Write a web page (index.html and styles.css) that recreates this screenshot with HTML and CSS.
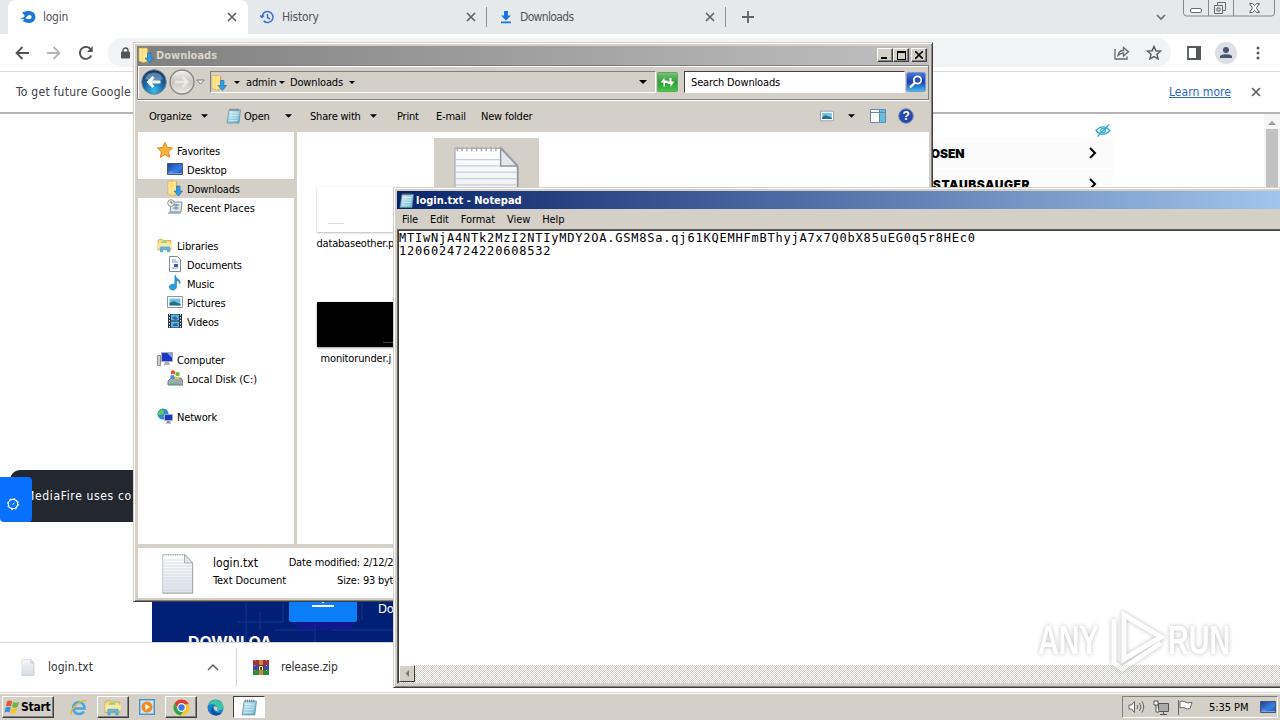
FILE: index.html
```html
<!DOCTYPE html>
<html lang="en">
<head>
    <meta charset="UTF-8">
    <title>Desktop</title>
    <link rel="stylesheet" href="styles.css">
</head>
<body>
<!-- shared icons -->
<svg class="defs" width="0" height="0">
    <linearGradient id="gFolder" x1="0" x2="1"><stop offset="0" stop-color="#fff2a8"/><stop offset="1" stop-color="#e3b94a"/></linearGradient>
    <linearGradient id="gPad" x1="0" x2="1" y2="1"><stop offset="0" stop-color="#d8f3fa"/><stop offset="1" stop-color="#62afc9"/></linearGradient>
    <linearGradient id="gScreen" x1="0" x2="1" y2="1"><stop offset="0" stop-color="#1b3f99"/><stop offset=".6" stop-color="#3b7fe0"/><stop offset="1" stop-color="#1c4db0"/></linearGradient>
    <linearGradient id="gPage" x1="0" x2="0" y2="1"><stop offset="0" stop-color="#fff"/><stop offset="1" stop-color="#dfe4ea"/></linearGradient>
    <linearGradient id="gFind" x1="0" x2="0" y2="1"><stop offset="0" stop-color="#4a78d8"/><stop offset=".5" stop-color="#1f3fae"/><stop offset="1" stop-color="#3fc4f0"/></linearGradient>
    <linearGradient id="gRef" x1="0" x2="0" y2="1"><stop offset="0" stop-color="#7cc67a"/><stop offset=".5" stop-color="#2d9a34"/><stop offset="1" stop-color="#45c94a"/></linearGradient>
    <radialGradient id="gBack" cx=".5" cy=".85" r=".8"><stop offset="0" stop-color="#37c0ee"/><stop offset=".5" stop-color="#1d6aa8"/><stop offset="1" stop-color="#123a68"/></radialGradient>
    <linearGradient id="gFwd" x1="0" x2="0" y2="1"><stop offset="0" stop-color="#f4f2ee"/><stop offset=".5" stop-color="#c9c6c0"/><stop offset="1" stop-color="#eeece8"/></linearGradient>
    <symbol id="dl" viewBox="0 0 16 16"><path d="M1 1h7l2 1v13l-5 .5L1 14z" fill="url(#gFolder)" stroke="#c9a23c" stroke-width=".6"/><path d="M5 2l4-1v13l-4 1.500z" fill="#fbe48c"/><path d="M9.500 6h3.500v5h2.600L11.500 16 7 11h2.500z" fill="#2f9ae8" stroke="#1668b0" stroke-width=".6"/></symbol>
    <symbol id="pad" viewBox="0 0 16 16"><path d="M3 2h11.500L13 15H1z" fill="url(#gPad)" stroke="#5b8798" stroke-width=".7"/><path d="M4 5h8M4 7.500h8M3.500 10h8M3 12.500h8" stroke="#f2fbfd" stroke-width=".6"/><path d="M4 .5v2.500M6 .5v2.500M8 .5v2.500M10 .5v2.500M12 .5v2.500" stroke="#667" stroke-width=".8"/></symbol>
    <symbol id="screen" viewBox="0 0 16 16"><path d="M.5 2.500h15v11h-15z" fill="url(#gScreen)" stroke="#49566b"/><path d="M1 12.500h14M2 11h4" stroke="#6aa5ee"/></symbol>
    <symbol id="lib" viewBox="0 0 16 16"><path d="M1 3l4-1 1 1.500h8V13H1z" fill="#f5dc82" stroke="#c6a347" stroke-width=".7"/><path d="M4 5l5-1 1 3H4z" fill="#7fcf74"/><path d="M1 6h14v5H1z" fill="#f9e8a4"/><path d="M3.500 15v-5h9v5h-2v-2.500h-5V15z" fill="#63b9e6" stroke="#3b8cbd" stroke-width=".5"/></symbol>
    <symbol id="pic" viewBox="0 0 16 16"><path d="M.5 2.500h15v11H.5z" fill="#fff" stroke="#8c97a3"/><path d="M2.500 4.500h11v7h-11z" fill="#6fc0e6"/><path d="M2.500 9l4-2 7 3v1.500h-11z" fill="#276d80"/></symbol>
    <symbol id="page" viewBox="0 0 32 42"><path d="M.7 1.500h22.500l7.300 8v30.500H.7z" fill="url(#gPage)" stroke="#b0b5bb" stroke-width=".7"/><path d="M.7 40.300h30v-30" fill="none" stroke="#8f959b" stroke-width=".7"/><path d="M1 7h21M1 10h21M1 13h29M1 16h29M1 19h29M1 22h29M1 25h29M1 28h29M1 31h29M1 34h29M1 37h29" stroke="#c3cede" stroke-width=".6"/><path d="M22.500 1.500v8.500h8z" fill="#e4e7ea" stroke="#8e949b" stroke-width=".7"/><path d="M1.500 2h21" stroke="#a8a8a8" stroke-width="2" stroke-dasharray=".7 1.600"/></symbol>
    <symbol id="x" viewBox="0 0 10 10"><path d="M1 1l8 8M9 1L1 9" stroke="#5f6368" stroke-width="1.700" fill="none"/></symbol>
    <symbol id="dn" viewBox="0 0 8 4"><path d="M0 0h8L4 4z"/></symbol>
</svg>

<div class="desktop">
    <div class="browser">
        <div class="tabs">
            <div class="tab active">
                <svg width="16" height="14" viewBox="0 0 16 14"><path d="M2 2.500C5 1 7 1 9.500 1a6 6 0 010 12C6 13 4 11.500 2 11c1-.3 2-.7 2.500-1.500C3 9.300 1.500 9 0 8c2 0 3.500-.5 4.500-1.500C5 5 3.500 4.500 2 2.500zM9.500 5C7.500 5 7 7 5.500 8c1 .8 2.500 1.200 4 1.200a2.100 2.100 0 000-4.200z" fill="#1d77d8"/></svg>
                <span>login</span><svg class="close"><use href="#x"/></svg>
            </div>
            <div class="tab">
                <svg width="14" height="14" viewBox="0 0 14 14" fill="none" stroke="#3b6fd0" stroke-width="1.500"><path d="M2 7a5.500 5.500 0 111.600 3.900M.2 5.500L2 7.500l2-2M7.500 4v3.500l2.500 1.500"/></svg>
                <span>History</span><svg class="close"><use href="#x"/></svg>
            </div>
            <div class="tab">
                <svg width="14" height="14" viewBox="0 0 14 14" fill="#1a73e8"><path d="M5 1h4v4.500h3L7 10.500 2 5.500h3zM2 11.500h10v1.700H2z"/></svg>
                <span>Downloads</span><svg class="close"><use href="#x"/></svg>
            </div>
            <svg class="plus" width="12" height="12"><path d="M6 0v12M0 6h12" stroke="#5f6368" stroke-width="1.800"/></svg>
            <svg class="chev" width="10" height="7"><path d="M1 1l4 4 4-4" fill="none" stroke="#6b6f74" stroke-width="1.700"/></svg>
            <svg class="winbtns" width="94" height="18" fill="none" stroke="#85898d"><path d="M1.500 0v13q0 3 3 3h85q3 0 3-3V0M26.500 0v16M51.500 0v16" /><g stroke="#676b70"><rect x="8.500" y="8.500" width="11" height="4" rx="1.500" fill="#fff"/><path d="M35.500 2.500h8v8h-3v3h-8v-8h3zM35.500 5.500h5v5M35 8h3v3h-3z"/><path d="M67.500 3.500h3l2 2 2-2h3l-3.200 4.500 3.200 4.500h-3l-2-2-2 2h-3L70.500 8z" fill="#fff"/></g></svg>
        </div>
        <div class="toolbar">
            <svg width="14" height="14" viewBox="0 0 14 14"><path d="M14 7H1.500M7.500 1l-6 6 6 6" fill="none" stroke="#505357" stroke-width="1.800"/></svg>
            <svg width="14" height="14" viewBox="0 0 14 14"><path d="M0 7h12.500M6.500 1l6 6-6 6" fill="none" stroke="#b3b5b8" stroke-width="1.800"/></svg>
            <svg width="14" height="14" viewBox="0 0 14 14"><path d="M12.300 9.500A6 6 0 1111.500 3" fill="none" stroke="#505357" stroke-width="1.900"/><path d="M13.700 0v6H8z" fill="#505357"/></svg>
            <div class="omnibox">
                <svg width="9" height="12"><path d="M2 5V3.500a2.500 2.500 0 015 0V5" fill="none" stroke="#555" stroke-width="1.400"/><rect y="4.500" width="9" height="7" rx="1" fill="#555"/></svg>
                <svg class="share" width="16" height="14" fill="none" stroke="#666a6f" stroke-width="1.300"><path d="M1 3v10h12v-2.500M4 9.500C4.500 6 6.500 4.500 9.500 4.500V1.500L14.500 5.700 9.500 10V7C7 7 5.500 8 4 9.500z"/></svg>
                <svg width="16" height="15"><path d="M8 1.500l1.900 4.300 4.600.4-3.500 3.100 1.100 4.600L8 11.500l-4.100 2.400L5 9.300 1.500 6.200l4.600-.4z" fill="none" stroke="#5b5f64" stroke-width="1.500"/></svg>
            </div>
            <svg class="side" width="14" height="14"><path d="M1 1h12v12H1z" fill="none" stroke="#55585c" stroke-width="1.800"/><path d="M9 0h5v14H9z" fill="#55585c"/></svg>
            <svg class="user" width="22" height="22"><circle cx="11" cy="11" r="11" fill="#dcdfe4"/><circle cx="11" cy="8" r="3" fill="#49536f"/><path d="M5 16v-1.500c0-3 12-3 12 0V16z" fill="#49536f"/></svg>
            <svg class="dots" width="4" height="14" fill="#55585c"><circle cx="2" cy="2" r="1.500"/><circle cx="2" cy="7" r="1.500"/><circle cx="2" cy="12" r="1.500"/></svg>
        </div>
        <div class="infobar">
            <span>To get future Google</span>
            <a>Learn more</a>
            <svg width="10" height="10"><use href="#x"/></svg>
        </div>
        <div class="page">
            <div class="ads">
                <svg class="eye" width="16" height="13" fill="none" stroke="#27a5d0" stroke-width="1.200"><path d="M1 6.500Q8-1 15 6.500 8 14 1 6.500zM2.500 12.500L14 .5"/><circle cx="8" cy="6.500" r="2.300"/></svg>
                <div class="ad"><b>DOSEN</b><svg width="8" height="12"><path d="M1 1l5 5-5 5" fill="none" stroke="#000" stroke-width="2"/></svg></div>
                <div class="ad second"><b>E STAUBSAUGER</b><svg width="8" height="12"><path d="M1 1l5 5-5 5" fill="none" stroke="#000" stroke-width="2"/></svg></div>
            </div>
            <div class="scroll"><svg width="8" height="4"><path d="M4 0l4 4H0z" fill="#9a9a9a"/></svg><div class="thumb"></div></div>
            <div class="cookie">MediaFire uses co</div>
            <div class="gear"><svg width="14" height="14" fill="none" stroke="#fff"><circle cx="7" cy="7" r="4.700" stroke-width="1.200"/><circle cx="7" cy="7" r="5.600" stroke-dasharray="1.800 2.600" stroke-width="1"/><path d="M6.500 7.500L8.500 6"/></svg></div>
            <div class="banner">
                <svg width="241" height="42"><g stroke="#123a90" fill="none"><path d="M94 0v42M131 0v22H86M108 12v18M210 0v20M163 24v18M180 30h61M163 30h-40"/></g><path d="M145 22h55v9h-55z" fill="#2512a8" opacity=".4"/><rect x="137" y="-6" width="68" height="28" rx="2" fill="#0a7df7"/><path d="M160 6h22M169 0l2 2 2-2" stroke="#fff" stroke-width="2" fill="none"/></svg>
                <b>DOWNLOA</b><span>Do</span>
            </div>
        </div>
        <div class="shelf">
            <div class="dlitem"><svg width="14" height="17"><use href="#page"/></svg><span>login.txt</span><svg class="up" width="12" height="7"><path d="M1 6l5-5 5 5" fill="none" stroke="#5f6368" stroke-width="1.500"/></svg></div>
            <div class="dlitem"><svg width="16" height="15"><path fill="#b12b3e" d="M0 0h16v5H0z"/><path fill="#3b4fa8" d="M0 5h16v5H0z"/><path fill="#2b8a3c" d="M0 10h16v5H0z"/><path fill="#c98a35" d="M6 0h4v15H6z"/><path d="M5 5h6v5H5z" fill="#6b3a1a"/><path d="M6.500 10V6.500h3V10" stroke="#fff" fill="none"/><path d="M2 0v15M13.500 0v15" stroke="#e8b04a" stroke-dasharray="1 4"/></svg><span>release.zip</span></div>
        </div>
    </div>

    <div class="window explorer">
        <div class="title"><svg width="16" height="16"><use href="#dl"/></svg><b>Downloads</b>
            <div class="caps"><i><svg width="8" height="8"><path d="M0 6h6v2H0z"/></svg></i><i><svg width="9" height="9"><path d="M0 0h9v9H0zM1 2v6h7V2z" fill-rule="evenodd"/></svg></i><i class="gap"><svg width="8" height="8"><path d="M0 0l8 8M8 0L0 8" stroke="#000" stroke-width="1.600"/></svg></i></div>
        </div>
        <div class="address">
            <svg width="26" height="26" viewBox="0 0 26 26"><circle cx="13" cy="13" r="12.300" fill="url(#gBack)" stroke="#7d8791"/><path d="M4 10a9.500 9.500 0 0118 0q-9 4-18 0z" fill="#fff" opacity=".3"/><path d="M19.500 13h-12M12.500 8l-5 5 5 5" stroke="#fff" stroke-width="2.800" fill="none"/></svg>
            <svg width="26" height="26" viewBox="0 0 26 26"><circle cx="13" cy="13" r="12" fill="url(#gFwd)" stroke="#8b8a88" stroke-width="1.400"/><path d="M6 13h12M13.500 8l5 5-5 5" stroke="#ebe9e5" stroke-width="2.500" fill="none"/></svg>
            <svg class="hist" width="9" height="6"><path d="M.7 1h7.600L4.500 5z" fill="#fff" stroke="#777"/></svg>
            <div class="crumbs"><svg width="16" height="17"><use href="#dl"/></svg><svg class="d"><use href="#dn"/></svg><span>admin</span><svg class="d"><use href="#dn"/></svg><span class="w53">Downloads</span><svg class="d"><use href="#dn"/></svg><svg class="d last"><use href="#dn"/></svg></div>
            <svg class="refresh" width="21" height="20"><rect x=".5" y=".5" width="20" height="19" rx="1" fill="url(#gRef)" stroke="#5fa565"/><path d="M6.500 14.500v-4H3.500L7.500 5.500v3h3v2.500H8v3.500zM14.500 6v3.500h3L13.500 15v-3h-3V9.500h2V6z" fill="#fff"/></svg>
            <div class="search">Search Downloads</div>
            <svg class="find" width="20" height="20"><rect x=".5" y=".5" width="19" height="19" rx="2" fill="url(#gFind)" stroke="#7a95cf"/><circle cx="11.500" cy="8" r="3.700" fill="#2b4fc0" stroke="#fff" stroke-width="1.800"/><path d="M8.500 11L4 15.500" stroke="#fff" stroke-width="2.400"/></svg>
        </div>
        <div class="commands">
            <span class="c1">Organize</span><svg class="d"><use href="#dn"/></svg>
            <svg class="padicon" width="16" height="16"><use href="#pad"/></svg><span class="c2">Open</span><svg class="d"><use href="#dn"/></svg>
            <span class="c3">Share with</span><svg class="d"><use href="#dn"/></svg>
            <span class="c4">Print</span><span class="c5">E-mail</span><span class="c6">New folder</span>
            <svg class="views" width="14" height="14"><use href="#pic"/></svg><svg class="d"><use href="#dn"/></svg>
            <svg class="preview" width="16" height="14"><path d="M.5 .5h15v13H.5z" fill="#fff" stroke="#6d86ad"/><path d="M10 1h5v12h-5z" fill="#66bfdf"/><path d="M1 3.500h14M9.500 1v12" stroke="#6d86ad"/></svg>
            <svg class="help" width="16" height="16"><circle cx="8" cy="8" r="7.300" fill="#2947a8" stroke="#7f8fc2"/><text x="8" y="12.300" text-anchor="middle">?</text></svg>
        </div>
        <div class="body">
            <div class="nav">
                <div class="n top"><svg viewBox="0 0 16 16"><path d="M8 .5l2.300 5 5.200.6-4 3.700 1.200 5.500L8 12.500l-4.700 2.800 1.200-5.500-4-3.700 5.200-.6z" fill="#fcb43a" stroke="#dd7f18"/></svg><span>Favorites</span></div>
                <div class="n"><svg><use href="#screen"/></svg><span>Desktop</span></div>
                <div class="n sel"><svg><use href="#dl"/></svg><span>Downloads</span></div>
                <div class="n"><svg viewBox="0 0 16 16"><path d="M4 3h11l-1 10H3z" fill="#dfe5ea" stroke="#87919a"/><path d="M1 14h13M6 6h6M6 9h6M9 5v6" stroke="#5f86a6"/><circle cx="4" cy="4" r="3.300" fill="#fff" stroke="#909090"/><path d="M4 2v2h1.500" stroke="#555" fill="none"/></svg><span class="wide">Recent Places</span></div>
                <div class="n top sp"><svg><use href="#lib"/></svg><span>Libraries</span></div>
                <div class="n"><svg viewBox="0 0 16 16"><path d="M2.500 .5h8l3 3v12h-11z" fill="#fff" stroke="#7d8da0"/><path d="M5 4h4M5 6h6M5 12h6" stroke="#7f9cc0"/><path d="M7 8h4v3H7z" fill="#2e63a5"/></svg><span>Documents</span></div>
                <div class="n"><svg viewBox="0 0 16 16"><path d="M8 0c1 4 6 4 5 9-1-3-2.500-3.500-3.500-3.500V12a3.600 3 0 11-1.800-2.500z" fill="#2c9ae4" stroke="#176cb0" stroke-width=".5"/></svg><span>Music</span></div>
                <div class="n"><svg><use href="#pic"/></svg><span class="wide">Pictures</span></div>
                <div class="n"><svg viewBox="0 0 16 16"><path d="M1 1h14v14H1z" fill="#273443"/><path d="M4 1.500h8v6H4zM4 8.500h8v6H4z" fill="#5eaede"/><path d="M2.500 1v14M13.500 1v14" stroke="#fff" stroke-dasharray="1.500 1.500"/><path d="M5 5l3-2 3 3-3 1zM6 11l4-1 1 3H6z" fill="#27689a"/></svg><span>Videos</span></div>
                <div class="n top sp"><svg viewBox="0 0 16 16"><path d="M.5 4.500h3v10h-3z" fill="#ccd0d4" stroke="#8d9196"/><path d="M4.500 1.500h11v9h-11z" fill="#1d37c4" stroke="#a9aeb4"/><path d="M10 2h5v5z" fill="#7e9df2"/><path d="M8 11h4l1 3H7z" fill="#a9aeb4"/></svg><span>Computer</span></div>
                <div class="n"><svg viewBox="0 0 16 16"><path d="M2 10l2-2h10l2 3v4H1v-4z" fill="#9cabb2" stroke="#6c7a80"/><path d="M3 14h7" stroke="#3fbf4a"/><path d="M4 1q2-1.500 4 0v3.500q-2-1-4 0z" fill="#e8562a"/><path d="M8.500 1.500q2 1.500 4 .5v3.500q-2 1-4 0z" fill="#6db83a"/><path d="M3.500 5.500q2-1 4 0V9h-4z" fill="#3f8ee0"/><path d="M8 6q2 1.500 4 .5V9H8z" fill="#f7c52c"/></svg><span class="wide">Local Disk (C:)</span></div>
                <div class="n top sp"><svg viewBox="0 0 16 16"><circle cx="6" cy="6" r="5.500" fill="#2b8fc9"/><path d="M3 2q4-1 4 2T3 7 1 5zM6 8h4l-2 3z" fill="#6cc45f"/><path d="M7.500 6.500h8v6h-8z" fill="#1d37c4" stroke="#a9aeb4"/><path d="M10 13h3l1 2.500H9z" fill="#8e9499"/></svg><span>Network</span></div>
            </div>
            <div class="files">
                <div class="file"><div class="pv white"></div><span>databaseother.p</span></div>
                <div class="file selected"><svg width="68" height="88" viewBox="0 0 32 42"><use href="#page"/></svg></div>
                <div class="file"><div class="pv black"></div><span>monitorunder.j</span></div>
            </div>
        </div>
        <div class="details">
            <svg width="32" height="42"><use href="#page"/></svg>
            <div class="dname"><big>login.txt</big><span>Text Document</span></div>
            <div class="dkeys"><span>Date modified:</span><span>Size:</span></div>
            <div class="dvals"><span>2/12/2024</span><span>93 bytes</span></div>
        </div>
    </div>

    <div class="window notepad">
        <div class="title"><svg width="16" height="17"><use href="#pad"/></svg><b>login.txt - Notepad</b></div>
        <div class="menu"><span>File</span><span>Edit</span><span>Format</span><span>View</span><span>Help</span></div>
        <div class="edit">
            <pre>MTIwNjA4NTk2MzI2NTIyMDY2OA.GSM8Sa.qj61KQEMHFmBThyjA7x7Q0bX85uEG0q5r8HEc0
1206024724220608532</pre>
            <div class="hscroll"><i><svg width="5" height="7"><path d="M4 0v7L.5 3.500z" fill="#777"/></svg></i></div>
        </div>
    </div>

    <div class="watermark">
        <span>ANY</span>
        <svg width="56" height="66" viewBox="0 0 56 66" fill="none" stroke="#fff" stroke-width="5"><path d="M15 44V8l37 22-37 22v-12"/><path d="M5 12v44l8 6 39-26"/></svg>
        <span>RUN</span>
    </div>

    <div class="taskbar">
        <div class="start"><svg width="16" height="15" viewBox="0 0 16 15"><path d="M3 1.500q3-2 5 0L7 6.500q-2.500-1.500-5 0z" fill="#e8562a"/><path d="M9 2q3 1.500 6 0l-1.500 5q-3 1.500-5.500 0z" fill="#6db83a"/><path d="M1.700 7.500q2.500-1.500 5 0l-1.200 5q-2.500-1.500-5 0z" fill="#3f8ee0"/><path d="M7.500 8q3 1.500 5.500 0l-1.200 5q-3 1.500-5.500 0z" fill="#f7c52c"/></svg><b>Start</b></div>
        <div class="task"><svg width="18" height="17" viewBox="0 0 18 17" fill="none"><path d="M14 12.500A6 6 0 119 3a6 6 0 015.500 6.500H4" stroke="#45a8df" stroke-width="2.500"/><path d="M1.500 15.500C-1 12 8 1.500 16.500 1.500" stroke="#e9b52e" stroke-width="1.500"/></svg></div>
        <div class="task raised"><svg width="18" height="18"><use href="#lib"/></svg></div>
        <div class="task"><svg width="16" height="16"><rect x=".7" y=".7" width="14.600" height="14.600" fill="#cde5f5" stroke="#4a94c9" stroke-width="1.400"/><circle cx="8" cy="8" r="5.500" fill="#f18a1c"/><path d="M6.300 5l4.700 3-4.700 3z" fill="#fff"/></svg></div>
        <div class="task raised"><svg width="17" height="17" viewBox="0 0 18 18"><circle cx="9" cy="9" r="8.500" fill="#f8c72c"/><path d="M1.600 4.800A8.500 8.500 0 0116.700 5.500H9L5.500 11z" fill="#e03b2f"/><path d="M1.600 4.800A8.500 8.500 0 008 17.400L12 11 5.500 11z" fill="#2fa24c"/><circle cx="9" cy="9" r="4" fill="#3878e8" stroke="#fff" stroke-width="1.300"/></svg></div>
        <div class="task"><svg width="17" height="17" viewBox="0 0 18 18"><circle cx="9" cy="9" r="8.500" fill="#1683d0"/><path d="M1 7C3-1 16-1 17.500 8.500c0 3-4.500 4-7 2.500C13 7 6 3.500 1 7z" fill="#3fc4a0"/><path d="M7 8.500c-1 5 4 8 9 5.500-2 3-5 4-8 3.200C3 15 3 10 7 8.500z" fill="#0c4f9e"/><path d="M10.500 11C12 8 9 6.500 7 8.500c-.5 2 2 5 6 4.500z" fill="#d6d0c8"/></svg></div>
        <div class="task pressed"><svg width="17" height="17"><use href="#pad"/></svg></div>
        <div class="tray">
            <svg width="17" height="14" fill="none" stroke="#666"><path d="M1 5h2.500l3-3.500v11L3.500 9H1z" fill="#fff"/><path d="M9 5q1.500 2 0 4M11.500 3q3 4 0 8M14 1.500q3.500 5.500 0 11"/></svg>
            <svg width="16" height="15" fill="none" stroke="#555"><path d="M5.500 3.500h10v8h-10z" fill="#aaa"/><path d="M7 14.500h7M10.500 12v2M1 1v4h4V1M3 5v7h3M2 0v2M4 0v2" fill="#fff"/></svg>
            <svg width="17" height="15"><path d="M1.500 0v15M3 1.500q3-1 5 .5t7 .5L13 8.500q-3 1-5-.5t-5 0z" fill="#fff" stroke="#666"/></svg>
            <span>5:35 PM</span>
            <svg class="show" width="16" height="16"><use href="#screen"/></svg>
        </div>
    </div>
</div>
</body>
</html>
```
FILE: styles.css
```css
* {
    box-sizing: border-box;
}
body {
    margin: 0;
    font-family: "DejaVu Sans Condensed", "DejaVu Sans", sans-serif;
    font-size: 11px;
    letter-spacing: -0.25px;
    color: #000;
}
svg {
    display: block;
    flex: none;
}
.defs {
    position: absolute;
}
.desktop {
    position: relative;
    width: 1280px;
    height: 720px;
    overflow: hidden;
    display: flex;
    flex-direction: column;
    white-space: nowrap;
}

/* browser */
.browser {
    height: 692px;
    display: flex;
    flex-direction: column;
    background: #fff;
}
.tabs {
    height: 34px;
    padding-left: 8px;
    display: flex;
    align-items: center;
    background: #e6e9ec;
    color: #50545a;
}
.tab {
    width: 239px;
    height: 20px;
    padding: 0 10px 0 12px;
    display: flex;
    align-items: center;
    gap: 8px;
    font-size: 12px;
    border-right: 1px solid #90949a;
}
.tab.active {
    width: 240px;
    height: 34px;
    padding: 0 11px 0 12px;
    gap: 7px;
    border: 0;
    border-radius: 8px 8px 0 0;
    background: #fff;
}
.tab:nth-child(3) {
    letter-spacing: -0.65px;
    gap: 7px;
}
.close {
    width: 10px;
    height: 10px;
    margin-left: auto;
}
.plus {
    margin-left: 16px;
}
.chev {
    margin-left: auto;
}
.winbtns {
    margin: 0 4px 0 16px;
    align-self: flex-start;
}
.toolbar {
    height: 38px;
    padding: 0 20px 0 15px;
    display: flex;
    align-items: center;
    gap: 18px;
    border-bottom: 1px solid #dadce0;
}
.omnibox {
    width: 1063px;
    height: 29px;
    margin-left: -3px;
    padding: 0 9px 0 13px;
    display: flex;
    align-items: center;
    border-radius: 14px;
    background: #f1f3f4;
}
.share {
    margin: 0 16px 0 auto;
}
.side {
    margin-left: -2px;
}
.user {
    margin-left: -4px;
}
.dots {
    margin-left: 1px;
}
.infobar {
    height: 42px;
    padding: 0 19px 0 16px;
    display: flex;
    align-items: center;
    border-bottom: 2px solid #b5b5b5;
    font-size: 12px;
    color: #3c4043;
}
.infobar span {
    letter-spacing: 0.26px;
}
.infobar a {
    margin: 0 20px 0 auto;
    color: #2b66c4;
    text-decoration: underline;
    letter-spacing: 0.05px;
}
.page {
    position: relative;
    flex: 1;
    display: flex;
    justify-content: flex-end;
}
.ads {
    width: 190px;
    margin-right: 152px;
    padding-top: 10px;
}
.eye {
    margin-left: 173px;
}
.ad {
    height: 30px;
    width: 191px;
    margin-top: 1px;
    padding: 0 16px 0 0;
    display: flex;
    align-items: center;
    justify-content: space-between;
    background: #fbfbfb;
    font: bold 12px Inter, sans-serif;
    letter-spacing: 0;
}
.ad.second {
    letter-spacing: 0.55px;
}
.scroll {
    width: 16px;
    height: 100%;
    background: #f5f5f5;
    display: flex;
    flex-direction: column;
    align-items: center;
    padding-top: 7px;
}
.thumb {
    width: 12px;
    height: 200px;
    margin-top: 4px;
    background: #c1c1c1;
}
.cookie {
    position: absolute;
    left: 10px;
    top: 356px;
    width: 700px;
    height: 52px;
    padding-left: 15px;
    line-height: 53px;
    border-radius: 10px;
    background: #23272f;
    color: #fff;
    font-size: 12px;
    letter-spacing: 0.65px;
}
.gear {
    position: absolute;
    left: 0;
    top: 363px;
    width: 32px;
    height: 45px;
    padding: 20px 6px;
    border-radius: 0 4px 4px 4px;
    background: #0870ff;
}
.banner {
    position: absolute;
    left: 152px;
    bottom: 0;
    width: 728px;
    height: 42px;
    overflow: hidden;
    background: #001f75;
    color: #fff;
}
.banner b {
    position: absolute;
    left: 36px;
    top: 32px;
    font: bold 16px Inter, sans-serif;
    letter-spacing: -0.1px;
}
.banner span {
    position: absolute;
    left: 226px;
    top: 1px;
    font-size: 13px;
}
.shelf {
    height: 50px;
    padding-bottom: 1px;
    border-top: 1px solid #d5d5d5;
    display: flex;
    align-items: center;
    font-size: 12px;
    color: #333;
}
.dlitem {
    width: 237px;
    height: 38px;
    padding-left: 21px;
    display: flex;
    align-items: center;
    gap: 13px;
    border-right: 1px solid #d5d5d5;
}
.dlitem + .dlitem {
    padding-left: 16px;
    gap: 12px;
}
.dlitem span {
    letter-spacing: 0.05px;
}
.dlitem + .dlitem span {
    letter-spacing: -0.15px;
}
.up {
    margin: 0 17px 0 auto;
}

/* windows */
.window {
    position: absolute;
    display: flex;
    flex-direction: column;
    background: #d4d0c8;
    border: 1px solid #d4d0c8;
    border-right-color: #404040;
    border-bottom-color: #404040;
    box-shadow: inset 1px 1px #fff, inset -1px -1px #808080;
}
.title {
    display: flex;
    align-items: center;
    font-size: 11px;
}
.title b {
    letter-spacing: 0;
}
.explorer {
    left: 133px;
    top: 42px;
    width: 800px;
    height: 560px;
    padding: 3px;
}
.explorer .title {
    height: 19px;
    padding: 0 2px 0 1px;
    gap: 2px;
    background: linear-gradient(90deg, #808080, #c0c0c0);
    color: #d8d4cc;
}
.caps {
    margin-left: auto;
    display: flex;
}
.caps i {
    width: 16px;
    height: 14px;
    display: flex;
    align-items: center;
    justify-content: center;
    background: #d4d0c8;
    border: 1px solid;
    border-color: #fff #404040 #404040 #fff;
    box-shadow: inset -1px -1px #808080;
}
.caps .gap {
    margin-left: 2px;
}
.address {
    height: 35px;
    padding: 0 1px 0 3px;
    display: flex;
    align-items: center;
    border: 1px solid #808080;
    box-shadow: inset 1px 1px #fff, 0 1px #fff;
}
.address > svg:nth-child(2) {
    margin-left: 2px;
}
.hist {
    margin: 0 5px 0 1px;
}
.crumbs {
    width: 446px;
    height: 22px;
    display: flex;
    align-items: center;
    border: 1px solid;
    border-color: #808080 #fff #fff #808080;
}
.d {
    width: 7px;
    height: 4px;
}
.crumbs .d {
    width: 6px;
    height: 3px;
    margin: 0 5px 0 7px;
}
.crumbs span {
    width: 28px;
    margin-left: 1px;
    letter-spacing: -0.15px;
}
.crumbs span + .d {
    margin: 0 4px 0 5px;
}
.crumbs .w53 {
    width: 54px;
}
.crumbs .last {
    width: 8px;
    height: 4px;
    margin: 0 8px 0 auto;
}
.refresh {
    margin: 0 6px 0 1px;
}
.search {
    width: 221px;
    height: 22px;
    padding-left: 6px;
    line-height: 21px;
    letter-spacing: -0.15px;
    background: #fff;
    border: 1px solid;
    border-color: #404040 #fff #fff #404040;
}
.find {
    margin-left: 1px;
}
.commands {
    height: 32px;
    padding: 1px 15px 0 12px;
    display: flex;
    align-items: center;
    letter-spacing: -0.2px;
}
.c1 { width: 52px; }
.padicon { margin: 0 2px 0 18px; }
.c2 { width: 41px; }
.c3 { width: 60px; margin-left: 18px; }
.c4 { width: 39px; margin-left: 20px; }
.c5 { width: 45px; }
.views { margin: 0 14px 0 auto; }
.preview { margin-left: 15px; }
.help { margin-left: 12px; }
.help text {
    font: bold 12px "Liberation Sans", sans-serif;
    fill: #fff;
}
.body {
    height: 413px;
    display: flex;
    background: #fff;
    border-left: 1px solid #d4d0c8;
}
.nav {
    width: 159px;
    padding-top: 9px;
    border-right: 3px solid #d4d0c8;
}
.n {
    height: 19px;
    padding-left: 29px;
    display: flex;
    align-items: center;
    gap: 4px;
}
.n svg {
    width: 16px;
    height: 16px;
}
.n span {
    padding-top: 2px;
    letter-spacing: -0.18px;
}
.n .wide {
    letter-spacing: -0.08px;
}
.n.top {
    padding-left: 19px;
}
.n.sp {
    margin-top: 19px;
}
.n.sel {
    background: #d4d0c8;
}
.files {
    flex: 1;
    padding: 6px 0 0 7px;
    display: grid;
    grid-template-columns: 105px 105px;
    grid-auto-rows: 115px;
    column-gap: 25px;
    align-content: start;
}
.file {
    display: flex;
    flex-direction: column;
    align-items: center;
}
.file span {
    width: 80px;
    margin-top: 5px;
    letter-spacing: -0.2px;
}
.file:last-child span {
    width: 72px;
    letter-spacing: -0.15px;
}
.pv {
    width: 80px;
    height: 45px;
    margin-top: 49px;
}
.white {
    background: linear-gradient(#ddd, #ddd) 11px 36px / 16px 1px no-repeat #fff;
    box-shadow: 0 1px 2px #bbb;
}
.black {
    background: linear-gradient(#443, #443) 66px 40px / 12px 1px no-repeat #000;
    box-shadow: 0 1px 2px #999;
}
.selected {
    padding-top: 7px;
    background: #d4d0c8;
}
.details {
    height: 54px;
    margin-left: 1px;
    padding: 0 0 0 24px;
    display: flex;
    align-items: center;
    border-top: 4px solid #d4d0c8;
    background: #fff;
}
.details > svg {
    margin-top: 2px;
}
.details div {
    display: flex;
    flex-direction: column;
    justify-content: space-between;
    height: 34px;
    margin-top: -3px;
}
.details span,
.details big {
    line-height: 16px;
}
.details .dname {
    width: 73px;
    margin-left: 19px;
    letter-spacing: -0.1px;
}
.details big {
    font-size: 12px;
    letter-spacing: 0.05px;
}
.details .dkeys {
    width: 74px;
    align-items: flex-end;
    letter-spacing: -0.15px;
}
.details .dvals {
    margin-left: 3px;
}

/* notepad */
.notepad {
    left: 393px;
    top: 187px;
    width: 920px;
    height: 501px;
    padding: 3px;
}
.notepad .title {
    height: 18px;
    padding-left: 2px;
    background: linear-gradient(90deg, #0a246a, #a6caf0);
    color: #fff;
    gap: 1px;
}
.menu {
    height: 20px;
    padding-left: 5px;
    display: flex;
    align-items: center;
    gap: 12px;
    letter-spacing: -0.1px;
}
.edit {
    flex: 1;
    display: flex;
    flex-direction: column;
    justify-content: space-between;
    background: #fff;
    border: 1px solid;
    border-color: #606060 #fff #d4d0c8 #606060;
    box-shadow: inset 1px 1px #404040;
}
.edit pre {
    margin: 2px 1px;
    font: 12px/13px "DejaVu Sans Mono", monospace;
    letter-spacing: 0.786px;
}
.hscroll {
    height: 18px;
    margin-left: 1px;
    background: repeating-conic-gradient(#d4d0c8 0 25%, #fff 0 50%) 0 0 / 2px 2px;
}
.hscroll i {
    width: 16px;
    height: 17px;
    display: flex;
    align-items: center;
    justify-content: center;
    background: #d4d0c8;
    border: 1px solid;
    border-color: #fff #404040 #404040 #fff;
}

.watermark {
    position: absolute;
    left: 1038px;
    top: 607px;
    display: flex;
    align-items: center;
    gap: 3px;
    color: #fff;
    font: bold 41px/62px "Liberation Sans", sans-serif;
    filter: drop-shadow(0 0 2px #999);
    opacity: 0.65;
}
.watermark span {
    width: 68px;
    transform: scaleX(0.7);
    transform-origin: 0 0;
    letter-spacing: 0;
}

/* taskbar */
.taskbar {
    height: 28px;
    padding: 1px 2px 0;
    display: flex;
    align-items: center;
    background: #d4d0c8;
    border-top: 1px solid #d4d0c8;
    box-shadow: inset 0 1px #fff;
}
.start {
    width: 52px;
    height: 22px;
    margin-right: 9px;
    padding-left: 1px;
    display: flex;
    align-items: center;
    gap: 1px;
    border: 1px solid;
    border-color: #fff #404040 #404040 #fff;
    box-shadow: inset -1px -1px #808080;
    font-size: 12px;
}
.task {
    width: 32px;
    height: 22px;
    margin-right: 2px;
    display: flex;
    align-items: center;
    justify-content: center;
    border: 1px solid transparent;
}
.raised {
    border-color: #fff #404040 #404040 #fff;
    box-shadow: inset -1px -1px #808080;
}
.pressed {
    background: #fff;
    border-color: #404040 #fff #fff #404040;
}
.tray {
    width: 156px;
    height: 22px;
    margin-left: auto;
    padding: 0 1px 0 5px;
    display: flex;
    align-items: center;
    gap: 8px;
    border: 1px solid;
    border-color: #808080 #fff #fff #808080;
}
.tray span {
    margin-left: 7px;
    letter-spacing: -0.05px;
}
.show {
    margin-left: auto;
}
```
